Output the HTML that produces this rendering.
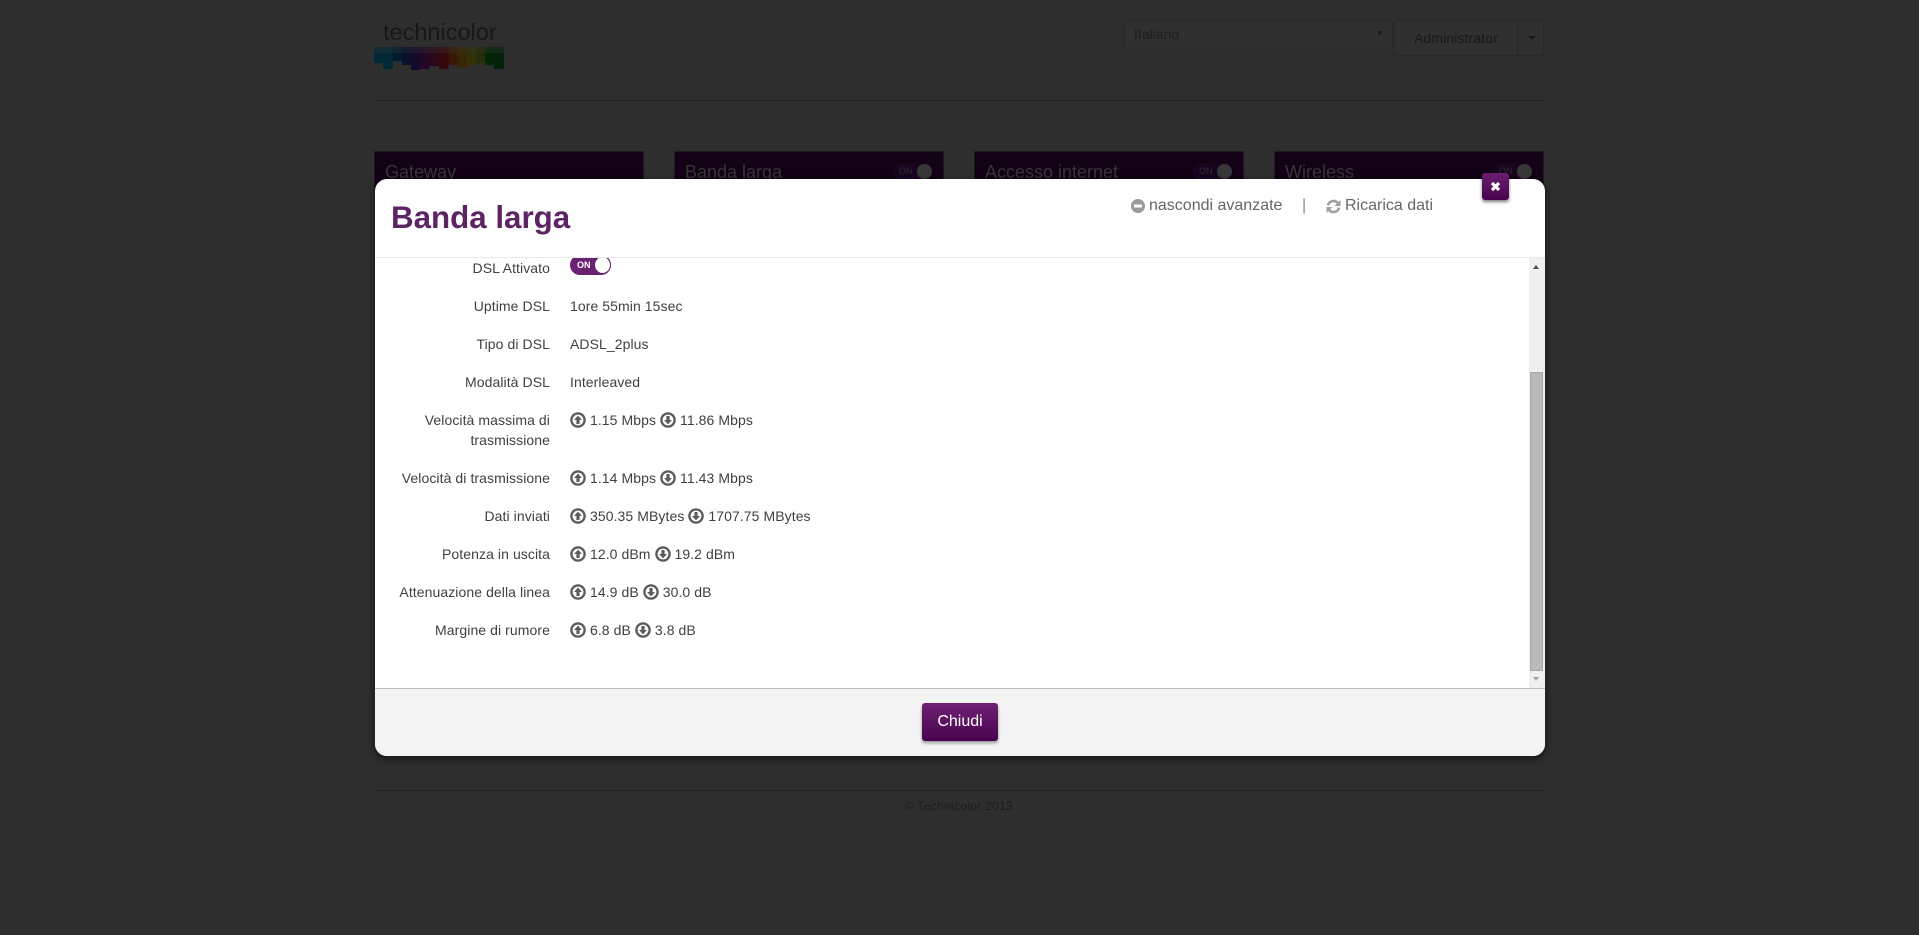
<!DOCTYPE html>
<html><head><meta charset="utf-8"><title>Banda larga</title>
<style>
*{box-sizing:border-box}
html,body{margin:0;padding:0;width:1919px;height:935px;overflow:hidden;background:#2e2e2e;font-family:"Liberation Sans",sans-serif;color:#3d3d3d}
.a{position:absolute}
.tile{position:absolute;top:151px;width:270px;height:40px;background:#130116;border:1px solid #201824;border-bottom:0}
.tile span.t{position:absolute;left:10px;top:8px;font-size:18px;line-height:24px;color:#363636}
.pill{position:absolute;top:11px;width:39px;height:17px;border-radius:9px;background:#190420}
.pill b{position:absolute;left:6px;top:3px;font-size:9px;line-height:11px;font-weight:normal;color:#2e2e2e}
.pill i{position:absolute;right:0;top:1px;width:15px;height:15px;border-radius:50%;background:#383838}
.modal{position:absolute;left:375px;top:179px;width:1170px;height:577px;background:#fff;border-radius:12px;box-shadow:0 3px 9px rgba(0,0,0,.55);overflow:hidden}
.l{position:absolute;left:375px;width:175px;text-align:right;font-size:14px;line-height:20px;color:#404040;letter-spacing:.08px}
.v{position:absolute;left:570px;font-size:14px;line-height:20px;color:#404040;white-space:nowrap;letter-spacing:.08px}
.v svg{width:16px;height:16px;vertical-align:-3px}
</style></head><body>

<div class="a" style="left:383px;top:17px;font-size:23.5px;line-height:30px;color:#181818;white-space:nowrap">technicolor</div>
<svg class="a" style="left:374px;top:46px" width="130" height="24" viewBox="0 0 130 24">
<rect x="0" y="1" width="10" height="16" fill="#022835"/>
<rect x="9" y="1" width="10" height="22" fill="#022835"/>
<rect x="18.500" y="1" width="10" height="14" fill="#011c30"/>
<rect x="28" y="1" width="9.500" height="18" fill="#0a102e"/>
<rect x="37" y="1" width="9.500" height="23" fill="#160a2c"/>
<rect x="46" y="1" width="9.500" height="22" fill="#220826"/>
<rect x="55.500" y="1" width="9.500" height="19" fill="#2b071a"/>
<rect x="65" y="1" width="9.500" height="22" fill="#34080d"/>
<rect x="74.500" y="1" width="9.500" height="18" fill="#391906"/>
<rect x="84" y="1" width="9.500" height="21" fill="#362804"/>
<rect x="93" y="1" width="9.500" height="18" fill="#313105"/>
<rect x="102" y="1" width="9.500" height="16" fill="#232d06"/>
<rect x="111" y="1" width="9.500" height="18" fill="#052506"/>
<rect x="120" y="1" width="10" height="22" fill="#04220a"/>
<rect x="0" y="1" width="130" height="6" fill="#333" opacity=".35"/>
</svg>

<div class="a" style="left:1123px;top:20px;width:270px;height:30px;border:1px solid #282828;border-radius:4px;background:#303030;font-size:14px;line-height:27px;padding-left:10px;color:#1c1c1c">Italiano<span class="a" style="right:8px;top:-1px;font-size:9px;color:#1c1c1c">▼</span></div>
<div class="a" style="left:1393px;top:20px;width:151px;height:36px;border:1px solid #282828;border-radius:4px;background:#303030"></div>
<div class="a" style="left:1393px;top:20px;width:125px;height:36px;border-right:1px solid #282828;font-size:14px;line-height:36px;text-align:center;color:#181818;padding-left:2px;letter-spacing:.1px">Administrator</div>
<div class="a" style="left:1528px;top:36px;width:0;height:0;border-left:4px solid transparent;border-right:4px solid transparent;border-top:4px solid #1a1a1a"></div>
<div class="a" style="left:374px;top:100px;width:1170px;height:1px;background:#222"></div>

<div class="tile" style="left:374px"><span class="t">Gateway</span></div>
<div class="tile" style="left:674px"><span class="t">Banda larga</span><div class="pill" style="left:218px"><b>ON</b><i></i></div></div>
<div class="tile" style="left:974px"><span class="t">Accesso internet</span><div class="pill" style="left:218px"><b>ON</b><i></i></div></div>
<div class="tile" style="left:1274px;width:270px"><span class="t">Wireless</span><div class="pill" style="left:218px"><b>ON</b><i></i></div></div>

<div class="a" style="left:374px;top:790px;width:1170px;height:1px;background:#222"></div>
<div class="a" style="left:374px;top:798px;width:1170px;text-align:center;font-size:12px;line-height:16px;color:#1c1c1c;letter-spacing:.3px">© Technicolor 2013</div>

<div class="modal"></div>
<div class="a" style="left:391px;top:198px;font-size:31.3px;line-height:40px;font-weight:bold;color:#5d2463;white-space:nowrap">Banda larga</div>

<svg class="a" style="left:1131px;top:199px" width="14" height="14" viewBox="0 0 14 14"><circle cx="7" cy="7" r="7" fill="#9a9a9a"/><rect x="3" y="5.500" width="8" height="3" fill="#fff"/></svg>
<div class="a" style="left:1149px;top:195px;font-size:16px;line-height:22px;color:#666;white-space:nowrap">nascondi avanzate</div>
<div class="a" style="left:1302px;top:195px;font-size:16px;line-height:22px;color:#7a8a9a">|</div>
<svg class="a" style="left:1326px;top:199px" width="15" height="15" viewBox="0 0 15 15"><path d="M2 6.500A5.600 5.600 0 0 1 12 4.200" fill="none" stroke="#a0a0a0" stroke-width="2.600"/><path d="M14.500 1v6h-6z" fill="#a0a0a0"/><path d="M13 8.500A5.600 5.600 0 0 1 3 10.800" fill="none" stroke="#a0a0a0" stroke-width="2.600"/><path d="M.5 14V8h6z" fill="#a0a0a0"/></svg>
<div class="a" style="left:1345px;top:195px;font-size:16px;line-height:22px;color:#666;white-space:nowrap">Ricarica dati</div>

<div class="a" style="left:1482px;top:173px;width:27px;height:27px;border-radius:3px;background:linear-gradient(#6a1f70,#47034f);box-shadow:0 2px 3px rgba(0,0,0,.5)"></div>
<svg class="a" style="left:1490px;top:181px" width="11" height="11" viewBox="0 0 11 11"><path d="M2 2l7 7M9 2l-7 7" stroke="#fff" stroke-width="3.200"/></svg>

<div class="a" style="left:375px;top:257px;width:1170px;height:1px;background:#e8e8e8"></div>

<div class="a" style="left:1529px;top:258px;width:16px;height:430px;background:#efefef"></div>
<div class="a" style="left:1533px;top:265px;width:0;height:0;border-left:3.500px solid transparent;border-right:3.500px solid transparent;border-bottom:4px solid #505050"></div>
<div class="a" style="left:1530px;top:372px;width:13px;height:299px;background:#bababa;border:1px solid #a8a8a8"></div>
<div class="a" style="left:1533px;top:677px;width:0;height:0;border-left:3.500px solid transparent;border-right:3.500px solid transparent;border-top:4px solid #a3a3a3"></div>

<svg width="0" height="0" style="position:absolute"><defs>
<symbol id="u" viewBox="0 0 16 16"><circle cx="8" cy="8" r="6.600" fill="#fff" stroke="#5c5c5c" stroke-width="2.400"/><path d="M8 3.600L12 8H9.600v4H6.400V8H4z" fill="#5c5c5c"/></symbol>
<symbol id="d" viewBox="0 0 16 16"><circle cx="8" cy="8" r="6.600" fill="#fff" stroke="#5c5c5c" stroke-width="2.400"/><path d="M8 12.400L12 8H9.600V4H6.400v4H4z" fill="#5c5c5c"/></symbol>
</defs></svg>

<div class="a" style="left:375px;top:258px;width:1153px;height:30px;overflow:hidden;pointer-events:none">
 <div class="a" style="left:195px;top:-3px;width:41px;height:20px;border-radius:10px;background:#6a2272"></div>
 <div class="a" style="left:219px;top:-2px;width:17px;height:18px;border-radius:50%;background:#fff;border:1px solid #5d2463"></div>
 <div class="a" style="left:202px;top:2px;font-size:9px;line-height:11px;font-weight:bold;color:#fff">ON</div>
</div>

<div class="l" style="top:258px">DSL Attivato</div>
<div class="l" style="top:296px">Uptime DSL</div><div class="v" style="top:296px">1ore 55min 15sec</div>
<div class="l" style="top:334px">Tipo di DSL</div><div class="v" style="top:334px">ADSL_2plus</div>
<div class="l" style="top:372px">Modalità DSL</div><div class="v" style="top:372px">Interleaved</div>
<div class="l" style="top:410px">Velocità massima di trasmissione</div><div class="v" style="top:410px"><svg><use href="#u"/></svg> 1.15 Mbps <svg><use href="#d"/></svg> 11.86 Mbps</div>
<div class="l" style="top:468px">Velocità di trasmissione</div><div class="v" style="top:468px"><svg><use href="#u"/></svg> 1.14 Mbps <svg><use href="#d"/></svg> 11.43 Mbps</div>
<div class="l" style="top:506px">Dati inviati</div><div class="v" style="top:506px"><svg><use href="#u"/></svg> 350.35 MBytes <svg><use href="#d"/></svg> 1707.75 MBytes</div>
<div class="l" style="top:544px">Potenza in uscita</div><div class="v" style="top:544px"><svg><use href="#u"/></svg> 12.0 dBm <svg><use href="#d"/></svg> 19.2 dBm</div>
<div class="l" style="top:582px">Attenuazione della linea</div><div class="v" style="top:582px"><svg><use href="#u"/></svg> 14.9 dB <svg><use href="#d"/></svg> 30.0 dB</div>
<div class="l" style="top:620px">Margine di rumore</div><div class="v" style="top:620px"><svg><use href="#u"/></svg> 6.8 dB <svg><use href="#d"/></svg> 3.8 dB</div>

<div class="a" style="left:375px;top:688px;width:1170px;height:68px;background:#f4f4f4;border-top:1px solid #bdbdbd;border-radius:0 0 12px 12px"></div>
<div class="a" style="left:922px;top:703px;width:76px;height:38px;border-radius:3px;background:linear-gradient(#6f2272,#47034f);box-shadow:0 2px 3px rgba(0,0,0,.4);color:#fff;font-size:16px;line-height:38px;text-align:center">Chiudi</div>
</body></html>
